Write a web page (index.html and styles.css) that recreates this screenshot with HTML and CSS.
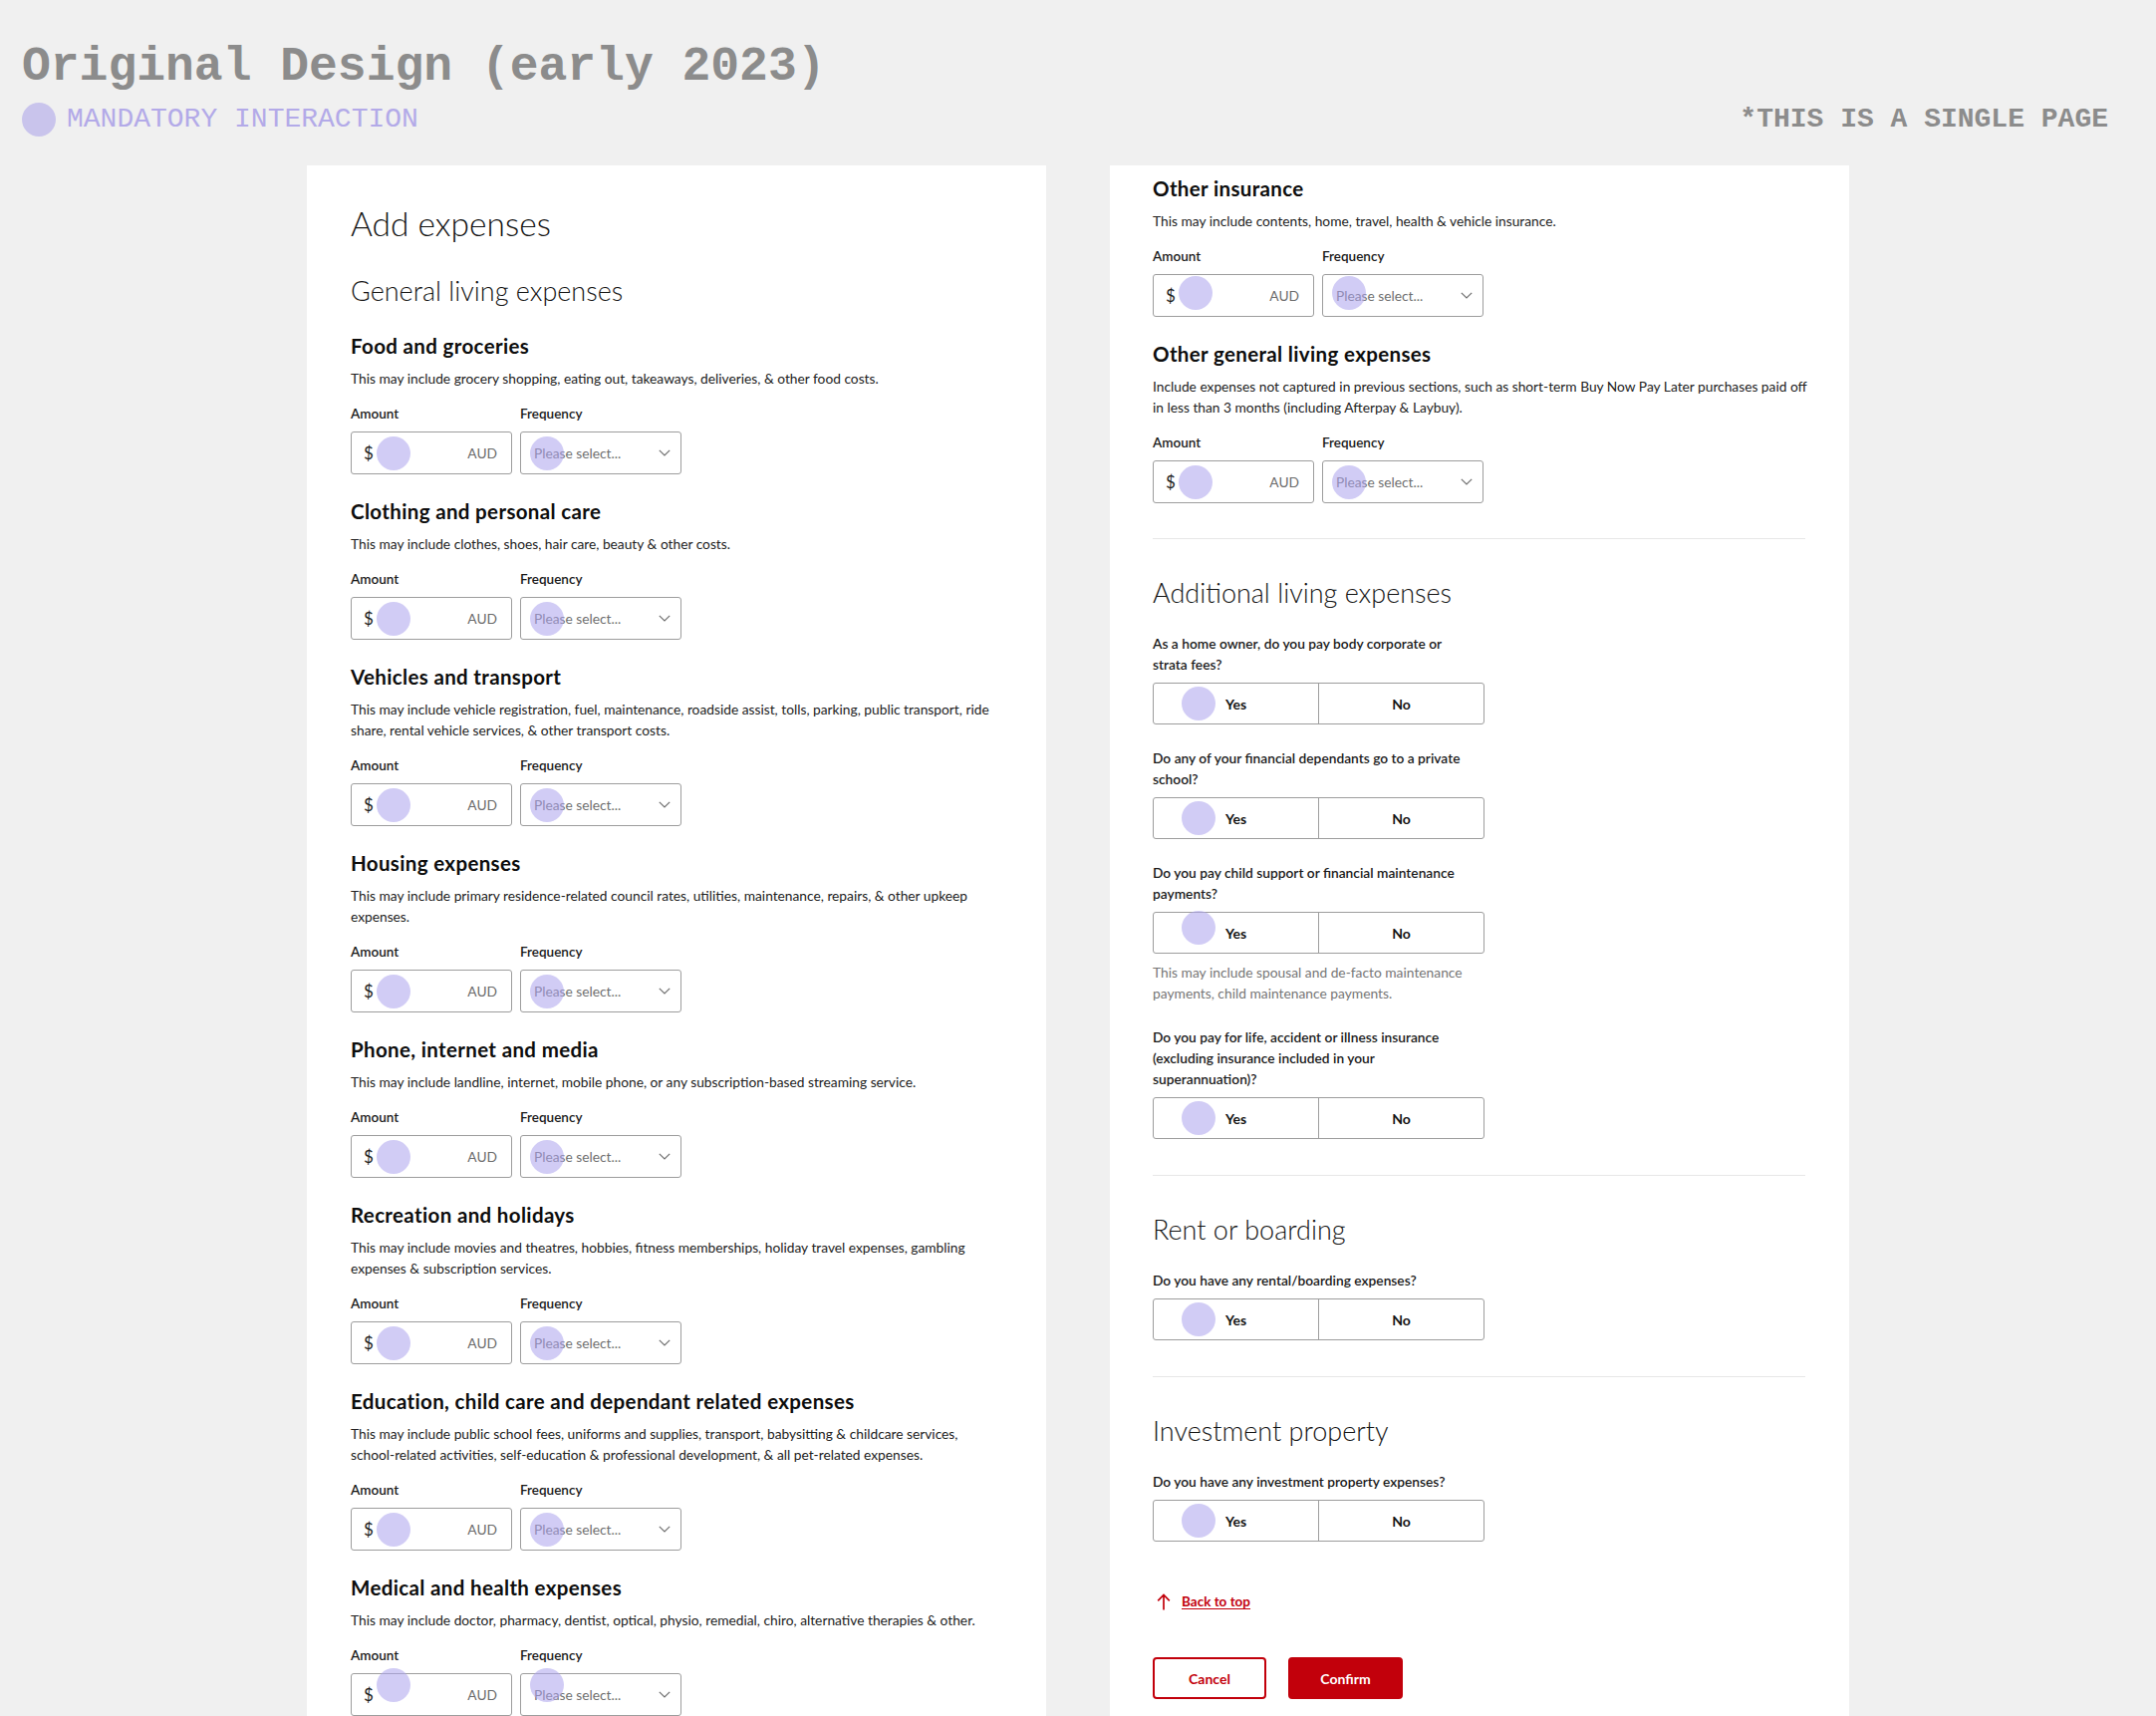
FILE: index.html
```html
<!DOCTYPE html>
<html lang="en">
<head>
<meta charset="utf-8">
<title>Original Design (early 2023)</title>
<link rel="stylesheet" href="styles.css">
</head>
<body>
<header class="top">
  <h1 class="top__title">Original Design (early 2023)</h1>
  <div class="top__row">
    <div class="legend"><span class="legend__dot"></span><span class="legend__text">MANDATORY INTERACTION</span></div>
    <div class="top__note">*THIS IS A SINGLE PAGE</div>
  </div>
</header>

<main class="boards">
  <section class="panel panel--left">
    <h1 class="page-title">Add expenses</h1>
    <h2 class="section-title section-title--first">General living expenses</h2>

    <div class="expense">
      <h3 class="expense__title">Food and groceries</h3>
      <p class="expense__desc">This may include grocery shopping, eating out, takeaways, deliveries, &amp; other food costs.</p>
      <div class="expense__fields">
        <div class="field"><div class="field__label">Amount</div><div class="amount"><span class="amount__cur">$</span><span class="amount__unit">AUD</span><span class="dot dot--amount"></span></div></div>
        <div class="field"><div class="field__label">Frequency</div><div class="select"><span class="select__ph">Please select...</span><svg class="select__chev" width="12" height="7" viewBox="0 0 12 7"><path d="M0.8 0.8 6 6 11.2 0.8" fill="none" stroke="#6f6f6f" stroke-width="1.2"/></svg><span class="dot dot--select"></span></div></div>
      </div>
    </div>

    <div class="expense">
      <h3 class="expense__title">Clothing and personal care</h3>
      <p class="expense__desc">This may include clothes, shoes, hair care, beauty &amp; other costs.</p>
      <div class="expense__fields">
        <div class="field"><div class="field__label">Amount</div><div class="amount"><span class="amount__cur">$</span><span class="amount__unit">AUD</span><span class="dot dot--amount"></span></div></div>
        <div class="field"><div class="field__label">Frequency</div><div class="select"><span class="select__ph">Please select...</span><svg class="select__chev" width="12" height="7" viewBox="0 0 12 7"><path d="M0.8 0.8 6 6 11.2 0.8" fill="none" stroke="#6f6f6f" stroke-width="1.2"/></svg><span class="dot dot--select"></span></div></div>
      </div>
    </div>

    <div class="expense">
      <h3 class="expense__title">Vehicles and transport</h3>
      <p class="expense__desc">This may include vehicle registration, fuel, maintenance, roadside assist, tolls, parking, public transport, ride<br>share, rental vehicle services, &amp; other transport costs.</p>
      <div class="expense__fields">
        <div class="field"><div class="field__label">Amount</div><div class="amount"><span class="amount__cur">$</span><span class="amount__unit">AUD</span><span class="dot dot--amount"></span></div></div>
        <div class="field"><div class="field__label">Frequency</div><div class="select"><span class="select__ph">Please select...</span><svg class="select__chev" width="12" height="7" viewBox="0 0 12 7"><path d="M0.8 0.8 6 6 11.2 0.8" fill="none" stroke="#6f6f6f" stroke-width="1.2"/></svg><span class="dot dot--select"></span></div></div>
      </div>
    </div>

    <div class="expense">
      <h3 class="expense__title">Housing expenses</h3>
      <p class="expense__desc">This may include primary residence-related council rates, utilities, maintenance, repairs, &amp; other upkeep<br>expenses.</p>
      <div class="expense__fields">
        <div class="field"><div class="field__label">Amount</div><div class="amount"><span class="amount__cur">$</span><span class="amount__unit">AUD</span><span class="dot dot--amount"></span></div></div>
        <div class="field"><div class="field__label">Frequency</div><div class="select"><span class="select__ph">Please select...</span><svg class="select__chev" width="12" height="7" viewBox="0 0 12 7"><path d="M0.8 0.8 6 6 11.2 0.8" fill="none" stroke="#6f6f6f" stroke-width="1.2"/></svg><span class="dot dot--select"></span></div></div>
      </div>
    </div>

    <div class="expense">
      <h3 class="expense__title">Phone, internet and media</h3>
      <p class="expense__desc">This may include landline, internet, mobile phone, or any subscription-based streaming service.</p>
      <div class="expense__fields">
        <div class="field"><div class="field__label">Amount</div><div class="amount"><span class="amount__cur">$</span><span class="amount__unit">AUD</span><span class="dot dot--amount"></span></div></div>
        <div class="field"><div class="field__label">Frequency</div><div class="select"><span class="select__ph">Please select...</span><svg class="select__chev" width="12" height="7" viewBox="0 0 12 7"><path d="M0.8 0.8 6 6 11.2 0.8" fill="none" stroke="#6f6f6f" stroke-width="1.2"/></svg><span class="dot dot--select"></span></div></div>
      </div>
    </div>

    <div class="expense">
      <h3 class="expense__title">Recreation and holidays</h3>
      <p class="expense__desc">This may include movies and theatres, hobbies, fitness memberships, holiday travel expenses, gambling<br>expenses &amp; subscription services.</p>
      <div class="expense__fields">
        <div class="field"><div class="field__label">Amount</div><div class="amount"><span class="amount__cur">$</span><span class="amount__unit">AUD</span><span class="dot dot--amount"></span></div></div>
        <div class="field"><div class="field__label">Frequency</div><div class="select"><span class="select__ph">Please select...</span><svg class="select__chev" width="12" height="7" viewBox="0 0 12 7"><path d="M0.8 0.8 6 6 11.2 0.8" fill="none" stroke="#6f6f6f" stroke-width="1.2"/></svg><span class="dot dot--select"></span></div></div>
      </div>
    </div>

    <div class="expense">
      <h3 class="expense__title">Education, child care and dependant related expenses</h3>
      <p class="expense__desc">This may include public school fees, uniforms and supplies, transport, babysitting &amp; childcare services,<br>school-related activities, self-education &amp; professional development, &amp; all pet-related expenses.</p>
      <div class="expense__fields">
        <div class="field"><div class="field__label">Amount</div><div class="amount"><span class="amount__cur">$</span><span class="amount__unit">AUD</span><span class="dot dot--amount"></span></div></div>
        <div class="field"><div class="field__label">Frequency</div><div class="select"><span class="select__ph">Please select...</span><svg class="select__chev" width="12" height="7" viewBox="0 0 12 7"><path d="M0.8 0.8 6 6 11.2 0.8" fill="none" stroke="#6f6f6f" stroke-width="1.2"/></svg><span class="dot dot--select"></span></div></div>
      </div>
    </div>

    <div class="expense">
      <h3 class="expense__title">Medical and health expenses</h3>
      <p class="expense__desc">This may include doctor, pharmacy, dentist, optical, physio, remedial, chiro, alternative therapies &amp; other.</p>
      <div class="expense__fields">
        <div class="field"><div class="field__label">Amount</div><div class="amount"><span class="amount__cur">$</span><span class="amount__unit">AUD</span><span class="dot dot--amount dot--up10"></span></div></div>
        <div class="field"><div class="field__label">Frequency</div><div class="select"><span class="select__ph">Please select...</span><svg class="select__chev" width="12" height="7" viewBox="0 0 12 7"><path d="M0.8 0.8 6 6 11.2 0.8" fill="none" stroke="#6f6f6f" stroke-width="1.2"/></svg><span class="dot dot--select dot--up10"></span></div></div>
      </div>
    </div>
  </section>

  <section class="panel panel--right">
    <div class="expense">
      <h3 class="expense__title">Other insurance</h3>
      <p class="expense__desc">This may include contents, home, travel, health &amp; vehicle insurance.</p>
      <div class="expense__fields">
        <div class="field"><div class="field__label">Amount</div><div class="amount"><span class="amount__cur">$</span><span class="amount__unit">AUD</span><span class="dot dot--amount dot--up3"></span></div></div>
        <div class="field"><div class="field__label">Frequency</div><div class="select"><span class="select__ph">Please select...</span><svg class="select__chev" width="12" height="7" viewBox="0 0 12 7"><path d="M0.8 0.8 6 6 11.2 0.8" fill="none" stroke="#6f6f6f" stroke-width="1.2"/></svg><span class="dot dot--select dot--up3"></span></div></div>
      </div>
    </div>

    <div class="expense">
      <h3 class="expense__title">Other general living expenses</h3>
      <p class="expense__desc">Include expenses not captured in previous sections, such as short-term Buy Now Pay Later purchases paid off<br>in less than 3 months (including Afterpay &amp; Laybuy).</p>
      <div class="expense__fields">
        <div class="field"><div class="field__label">Amount</div><div class="amount"><span class="amount__cur">$</span><span class="amount__unit">AUD</span><span class="dot dot--amount"></span></div></div>
        <div class="field"><div class="field__label">Frequency</div><div class="select"><span class="select__ph">Please select...</span><svg class="select__chev" width="12" height="7" viewBox="0 0 12 7"><path d="M0.8 0.8 6 6 11.2 0.8" fill="none" stroke="#6f6f6f" stroke-width="1.2"/></svg><span class="dot dot--select"></span></div></div>
      </div>
    </div>

    <hr class="divider divider--after-fields">

    <h2 class="section-title">Additional living expenses</h2>
    <p class="question">As a home owner, do you pay body corporate or<br>strata fees?</p>
    <div class="toggle"><div class="toggle__opt">Yes<span class="dot dot--toggle"></span></div><div class="toggle__opt">No</div></div>

    <p class="question">Do any of your financial dependants go to a private<br>school?</p>
    <div class="toggle"><div class="toggle__opt">Yes<span class="dot dot--toggle"></span></div><div class="toggle__opt">No</div></div>

    <p class="question">Do you pay child support or financial maintenance<br>payments?</p>
    <div class="toggle"><div class="toggle__opt">Yes<span class="dot dot--toggle dot--up5"></span></div><div class="toggle__opt">No</div></div>
    <p class="helper">This may include spousal and de-facto maintenance<br>payments, child maintenance payments.</p>

    <p class="question">Do you pay for life, accident or illness insurance<br>(excluding insurance included in your<br>superannuation)?</p>
    <div class="toggle"><div class="toggle__opt">Yes<span class="dot dot--toggle"></span></div><div class="toggle__opt">No</div></div>

    <hr class="divider">

    <h2 class="section-title">Rent or boarding</h2>
    <p class="question">Do you have any rental/boarding expenses?</p>
    <div class="toggle"><div class="toggle__opt">Yes<span class="dot dot--toggle"></span></div><div class="toggle__opt">No</div></div>

    <hr class="divider">

    <h2 class="section-title">Investment property</h2>
    <p class="question">Do you have any investment property expenses?</p>
    <div class="toggle"><div class="toggle__opt">Yes<span class="dot dot--toggle"></span></div><div class="toggle__opt">No</div></div>

    <a class="back-top" href="#"><svg class="back-top__icon" width="14" height="17" viewBox="0 0 14 17"><path d="M7 16.5V1.5M1.2 7.3 7 1.5l5.8 5.8" fill="none" stroke="#c2000b" stroke-width="1.7"/></svg><span class="back-top__text">Back to top</span></a>

    <div class="actions">
      <button class="btn btn--secondary" type="button">Cancel</button>
      <button class="btn btn--primary" type="button">Confirm</button>
    </div>
  </section>
</main>
</body>
</html>
```

FILE: styles.css
```css
* { box-sizing: border-box; }

html, body {
  margin: 0;
  padding: 0;
  background: #f0f0f0;
}

body {
  font-family: "Lato", "Noto Sans", sans-serif;
  color: #1d1d1d;
}

/* ---------- header ---------- */
.top {
  padding: 39px 48px 0 22px;
  font-family: "Liberation Mono", "DejaVu Sans Mono", monospace;
}

.top__title {
  margin: 0;
  font-size: 48px;
  line-height: 56px;
  font-weight: 700;
  color: #8c8c8c;
  font-family: "Liberation Mono", "DejaVu Sans Mono", monospace;
}

.top__row {
  margin-top: 8px;
  height: 34px;
  display: flex;
  align-items: center;
  justify-content: space-between;
}

.legend {
  display: flex;
  align-items: center;
  gap: 11px;
}

.legend__dot {
  width: 34px;
  height: 34px;
  border-radius: 50%;
  background: #c9c4ec;
}

.legend__text {
  font-size: 28px;
  line-height: 34px;
  color: #b3aae8;
}

.top__note {
  font-size: 28px;
  line-height: 34px;
  font-weight: 700;
  color: #8c8c8c;
}

/* ---------- boards ---------- */
.boards {
  margin-top: 29px;
  display: flex;
  justify-content: center;
  align-items: stretch;
  gap: 64px;
}

.panel {
  width: 742px;
  background: #ffffff;
  padding: 38px 44px 40px 44px;
}

.panel--right {
  padding: 11px 44px 40px 43px;
}

.page-title {
  margin: 0;
  font-size: 33.5px;
  line-height: 40px;
  font-weight: 300;
  color: #151515;
}

.section-title {
  margin: 38px 0 0;
  font-size: 27px;
  line-height: 32px;
  font-weight: 300;
  color: #151515;
}

.section-title--first {
  margin-top: 32px;
}

/* ---------- expense block ---------- */
.expense {
  margin-top: 25px;
}

.section-title--first + .expense {
  margin-top: 27px;
}

.panel--right > .expense:first-child {
  margin-top: 0;
}

.expense__title {
  margin: 0;
  font-size: 20.5px;
  line-height: 24px;
  font-weight: 700;
  letter-spacing: 0.35px;
  color: #0d0d0d;
}

.expense__desc {
  margin: 10px 0 0;
  font-size: 13.75px;
  line-height: 21px;
  color: #222;
  white-space: nowrap;
}

.expense__fields {
  margin-top: 16px;
  display: flex;
  gap: 8px;
}

.field {
  width: 162px;
}

.field__label {
  font-size: 13.5px;
  line-height: 18px;
  font-weight: 600;
  color: #1a1a1a;
  margin-bottom: 9px;
}

.amount,
.select {
  position: relative;
  height: 43px;
  border: 1px solid #9d9d9d;
  border-radius: 3px;
  display: flex;
  align-items: center;
  justify-content: space-between;
  background: #fff;
}

.amount {
  padding: 0 14px 0 12px;
}

.amount__cur {
  font-size: 17px;
  color: #1d1d1d;
}

.amount__unit {
  font-size: 13.75px;
  color: #6c6c6c;
}

.select {
  padding: 0 10px 0 13px;
}

.select__ph {
  font-size: 13.75px;
  color: #6f6f6f;
}

.select__chev {
  display: block;
}

/* ---------- interaction dots ---------- */
.dot {
  position: absolute;
  top: 50%;
  width: 34px;
  height: 34px;
  margin-top: -17px;
  border-radius: 50%;
  background: rgba(172, 162, 236, 0.55);
  pointer-events: none;
}

.dot--amount { left: 25px; }
.dot--select { left: 9px; }
.dot--toggle { left: 28px; }
.dot--up3 { margin-top: -20px; }
.dot--up5 { margin-top: -22px; }
.dot--up10 { margin-top: -27px; }

/* ---------- divider ---------- */
.divider {
  margin: 36px 0 0;
  border: 0;
  border-top: 1px solid #e7e7e7;
  height: 0;
}

.divider--after-fields {
  margin-top: 35px;
}

/* ---------- questions ---------- */
.question {
  margin: 23px 0 0;
  font-size: 13.75px;
  line-height: 21px;
  font-weight: 600;
  color: #1a1a1a;
  white-space: nowrap;
}

.section-title + .question {
  margin-top: 24px;
}

.helper {
  margin: 8px 0 0;
  font-size: 13.8px;
  line-height: 21px;
  color: #767676;
  white-space: nowrap;
}

.toggle {
  margin-top: 8px;
  width: 333px;
  height: 42px;
  display: flex;
  border: 1px solid #9d9d9d;
  border-radius: 3px;
}

.toggle__opt {
  position: relative;
  flex: 1;
  display: flex;
  align-items: center;
  justify-content: center;
  font-size: 14px;
  font-weight: 700;
  color: #141414;
}

.toggle__opt + .toggle__opt {
  border-left: 1px solid #9d9d9d;
}

/* ---------- footer links/buttons ---------- */
.back-top {
  margin-top: 51px;
  display: flex;
  align-items: center;
  gap: 11px;
  height: 18px;
  padding-left: 4px;
  color: #c2000b;
  text-decoration: none;
}

.back-top__icon {
  display: block;
}

.back-top__text {
  font-size: 13.5px;
  line-height: 18px;
  font-weight: 700;
  text-decoration: underline;
  text-underline-offset: 2px;
}

.actions {
  margin-top: 47px;
  display: flex;
  gap: 22px;
}

.btn {
  height: 42px;
  border-radius: 4px;
  font-family: "Lato", "Noto Sans", sans-serif;
  font-size: 14px;
  font-weight: 700;
  cursor: pointer;
}

.btn--secondary {
  width: 114px;
  background: #fff;
  border: 2px solid #c2000b;
  color: #c2000b;
}

.btn--primary {
  width: 115px;
  background: #c2000b;
  border: 2px solid #c2000b;
  color: #fff;
}
```
